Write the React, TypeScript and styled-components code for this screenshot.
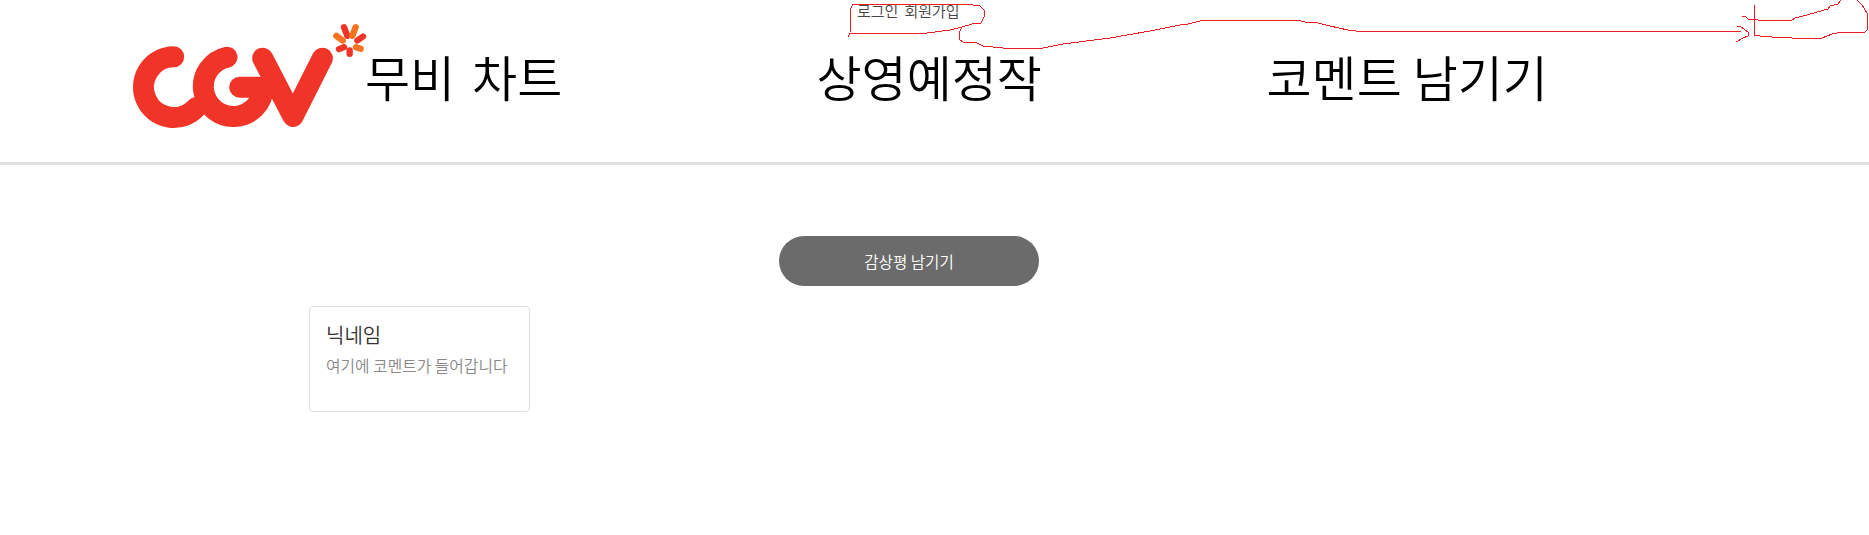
import React from "react";
import styled, { createGlobalStyle } from "styled-components";

const GlobalStyle = createGlobalStyle`
  html, body {
    margin: 0;
    padding: 0;
    background: #fff;
    font-family: "Noto Sans CJK KR", "Noto Sans", sans-serif;
  }
`;

const menuItems = ["무비 차트", "상영예정작", "코멘트 남기기"];

const Logo: React.FC = () => (
  <LogoSvg viewBox="95 70 705 320">
    <g fill="none" stroke="#f03427" strokeWidth="63" strokeLinecap="round" strokeLinejoin="round">
      <path d="M220 171 A91 91 0 1 0 288 323" />
      <path d="M380 172 A90 90 0 1 0 489 262 L418 262" />
      <path d="M487 175 L578 350 L666 175" />
    </g>
    <g fill="none" strokeWidth="19" strokeLinecap="round">
      <path d="M731 82 L741 108" stroke="#f03427" />
      <path d="M766 82 L756 108" stroke="#f57321" />
      <path d="M788 110 L771 122" stroke="#f03427" />
      <path d="M781 147 L767 142" stroke="#f57321" />
      <path d="M748 152 L748 162" stroke="#f03427" />
      <path d="M716 148 L731 142" stroke="#f03427" />
      <path d="M708 108 L727 122" stroke="#f57321" />
    </g>
  </LogoSvg>
);

// hand-drawn red marks lying over the header
const Scribble: React.FC = () => (
  <ScribbleSvg viewBox="0 0 1869 60" shapeRendering="crispEdges">
    <g fill="none" stroke="#ed1c24" strokeWidth="1">
      <path d="M848 37 L850 33 L851 8 L853 4 L966 4 L980 6 L984 10 L984 17 L981 23 L972 24 L962 27 L950 30 L927 33 L850 33" />
      <path d="M962 27 L959 33 L960 40 L963 42 L975 42 L983 46 L1003 48 L1043 48 L1063 44 L1110 38 L1150 31 L1180 25 L1188 24 L1200 21 L1215 20 L1297 20 L1305 22 L1318 23 L1330 26 L1348 30 L1356 31 L1741 31" />
      <path d="M1737 26 L1741 27 L1748 32 L1748 36 L1743 38 L1736 42" />
      <path d="M1742 16 L1745 16 L1748 19 L1758 20 L1792 20 L1795 18 L1807 15 L1817 12 L1828 9 L1830 6 L1838 4 L1841 0" />
      <path d="M1754 5 L1754 35 L1760 36 L1772 37 L1792 38 L1822 38 L1832 34 L1843 32 L1865 32 L1867 30 L1867 13 L1862 5 L1857 0" />
    </g>
  </ScribbleSvg>
);

const App: React.FC = () => (
  <>
    <GlobalStyle />
    <Page>
      <Header>
        <Scribble />
        <UtilityBar>
          <UtilityLink>로그인</UtilityLink>
          <UtilityLink>회원가입</UtilityLink>
        </UtilityBar>
        <MainBar>
          <Logo />
          <Menu>
            {menuItems.map((item) => (
              <MenuItem key={item}>{item}</MenuItem>
            ))}
          </Menu>
        </MainBar>
      </Header>
      <Content>
        <WriteButton>감상평 남기기</WriteButton>
        <CommentList>
          <CommentCard>
            <Nickname>닉네임</Nickname>
            <CommentText>여기에 코멘트가 들어갑니다</CommentText>
          </CommentCard>
        </CommentList>
      </Content>
    </Page>
  </>
);

const Page = styled.div`
  width: 100%;
  height: 535px;
  overflow: hidden;
  background: #fff;
`;

const Header = styled.header`
  position: relative;
  height: 162px;
  border-bottom: 3px solid #e0e0e0;
`;

const ScribbleSvg = styled.svg`
  position: absolute;
  top: 0;
  left: 0;
  width: 1869px;
  height: 60px;
  pointer-events: none;
`;

const UtilityBar = styled.div`
  display: flex;
  gap: 6px;
  height: 23px;
  padding: 1px 0 0 857px;
  box-sizing: border-box;
`;

const UtilityLink = styled.a`
  font-size: 15px;
  font-weight: 350;
  line-height: 20px;
  color: #444;
`;

const MainBar = styled.div`
  display: flex;
  align-items: flex-start;
  padding-left: 132px;
`;

const LogoSvg = styled.svg`
  flex: none;
  width: 235px;
  height: 107px;
`;

const Menu = styled.nav`
  display: grid;
  grid-template-columns: 451.5px 450px auto;
  margin: 17px 0 0 -2px;
`;

const MenuItem = styled.a`
  font-size: 49px;
  font-weight: 350;
  line-height: 72px;
  color: #000;
  white-space: nowrap;

  &:first-child {
    word-spacing: 6px;
  }
`;

const Content = styled.main`
  display: flex;
  flex-direction: column;
`;

const WriteButton = styled.button`
  align-self: flex-start;
  width: 260px;
  height: 50px;
  margin: 71px 0 0 779px;
  border: 0;
  border-radius: 25px;
  background: #6b6b6b;
  color: #fff;
  font-family: inherit;
  font-size: 15.6px;
  font-weight: 350;
`;

const CommentList = styled.div`
  display: flex;
  padding: 20px 0 0 309px;
`;

const CommentCard = styled.article`
  box-sizing: border-box;
  width: 221px;
  height: 106px;
  padding: 14px 16px;
  border: 1px solid #ddd;
  border-radius: 4px;
`;

const Nickname = styled.div`
  font-size: 20px;
  font-weight: 350;
  line-height: 28px;
  color: #333;
`;

const CommentText = styled.div`
  margin-top: 6px;
  font-size: 15.8px;
  font-weight: 350;
  line-height: 22px;
  color: #888;
  white-space: nowrap;
`;

export default App;
